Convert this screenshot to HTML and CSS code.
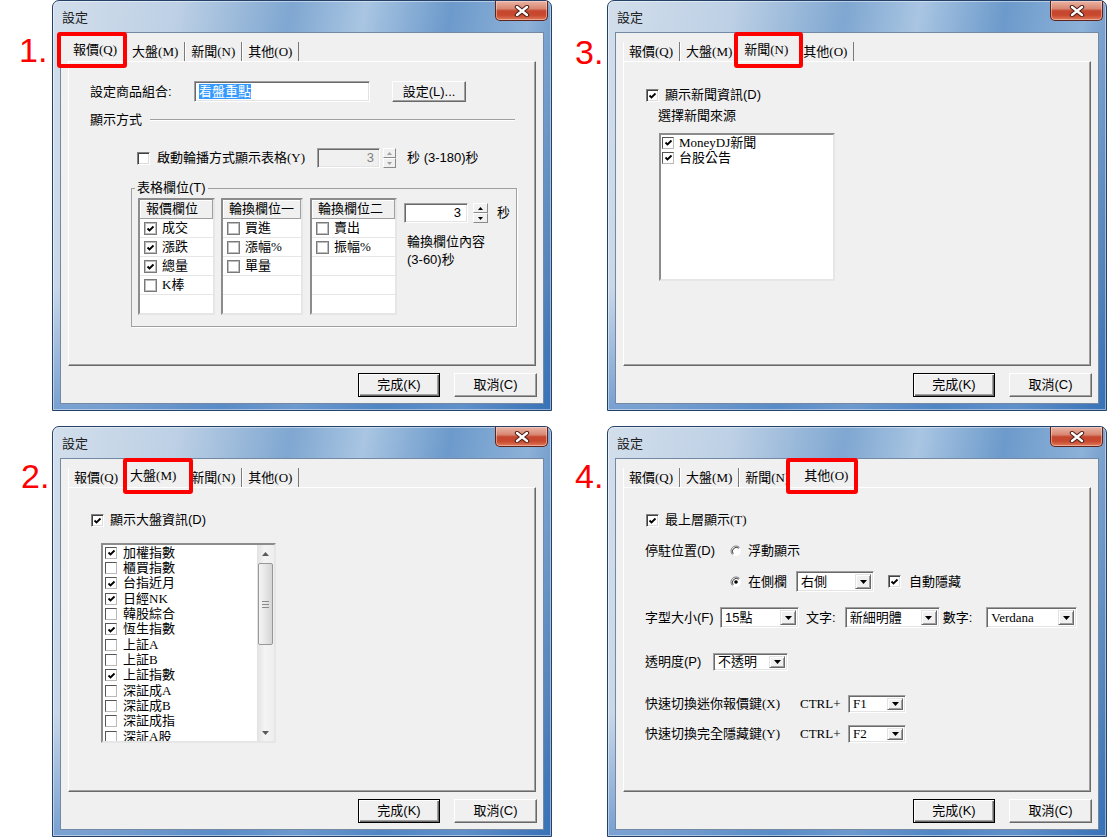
FILE: index.html
```html
<!DOCTYPE html>
<html lang="zh-Hant">
<head>
<meta charset="UTF-8">
<title>設定</title>
<link rel="stylesheet" href="styles.css">
</head>
<body>
<div class="sheet">

<div class="mark mark-1">1.</div>
<div class="win win-1">
  <div class="titlebar">
    <span class="title">設定</span>
    <span class="close"><svg width="16" height="12" viewBox="0 0 16 12"><path d="M3 2L13 10M13 2L3 10" stroke="#4a1d16" stroke-width="4.4" stroke-linecap="round"/><path d="M3 2L13 10M13 2L3 10" stroke="#fff" stroke-width="2.4" stroke-linecap="round"/></svg></span>
  </div>
  <div class="client">
    <div class="tabs">
      <span class="tab sel">報價(Q)</span><span class="tab">大盤(M)</span><span class="tab">新聞(N)</span><span class="tab">其他(O)</span>
    </div>
    <div class="panel p-quote">
      <div class="row r-combo">
        <span class="lbl-combo">設定商品組合:</span>
        <span class="edit edit-combo"><span class="hl">看盤重點</span></span>
        <button class="btn btn-set">設定(L)...</button>
      </div>
      <div class="row r-sep">
        <span>顯示方式</span><span class="etch"></span>
      </div>
      <div class="row r-rotate">
        <i class="cb"></i>
        <span class="t-rotate">啟動輪播方式顯示表格<span class="ming">(Y)</span></span>
        <span class="edit edit-sec off">3</span>
        <span class="spin off">
          <span class="spin-btn"><svg class="ar" viewBox="0 0 5 3"><path d="M0 3H5L2.5 0Z"/></svg></span>
          <span class="spin-btn"><svg class="ar" viewBox="0 0 5 3"><path d="M0 0H5L2.5 3Z"/></svg></span>
        </span>
        <span class="t-range">秒 (3-180)秒</span>
      </div>
      <fieldset class="group">
        <legend>表格欄位(T)</legend>
        <div class="cols">
          <div class="list l-quote">
            <div class="list-head">報價欄位</div>
            <div class="list-row"><i class="cb-flat"><svg class="ck" viewBox="0 0 9 9"><path d="M1.5 4.5L3.5 6.5L7.5 2.5"/></svg></i>成交</div>
            <div class="list-row"><i class="cb-flat"><svg class="ck" viewBox="0 0 9 9"><path d="M1.5 4.5L3.5 6.5L7.5 2.5"/></svg></i>漲跌</div>
            <div class="list-row"><i class="cb-flat"><svg class="ck" viewBox="0 0 9 9"><path d="M1.5 4.5L3.5 6.5L7.5 2.5"/></svg></i>總量</div>
            <div class="list-row"><i class="cb-flat"></i>K棒</div>
            <div class="list-row"></div>
          </div>
          <div class="list l-rot1">
            <div class="list-head">輪換欄位一</div>
            <div class="list-row"><i class="cb-flat"></i>買進</div>
            <div class="list-row"><i class="cb-flat"></i>漲幅%</div>
            <div class="list-row"><i class="cb-flat"></i>單量</div>
            <div class="list-row"></div>
            <div class="list-row"></div>
          </div>
          <div class="list l-rot2">
            <div class="list-head">輪換欄位二</div>
            <div class="list-row"><i class="cb-flat"></i>賣出</div>
            <div class="list-row"><i class="cb-flat"></i>振幅%</div>
            <div class="list-row"></div>
            <div class="list-row"></div>
            <div class="list-row"></div>
          </div>
          <div class="rot">
            <div class="rot-top">
              <span class="edit edit-rot">3</span>
              <span class="spin spin-rot">
                <span class="spin-btn"><svg class="ar" viewBox="0 0 5 3"><path d="M0 3H5L2.5 0Z"/></svg></span>
                <span class="spin-btn"><svg class="ar" viewBox="0 0 5 3"><path d="M0 0H5L2.5 3Z"/></svg></span>
              </span>
              <span class="t-sec">秒</span>
            </div>
            <div class="rot-note">輪換欄位內容</div>
            <div class="rot-note">(3-60)秒</div>
          </div>
        </div>
      </fieldset>
    </div>
    <div class="actions">
      <button class="btn btn-ok">完成(K)</button>
      <button class="btn">取消(C)</button>
    </div>
  </div>
</div>

<div class="mark mark-3">3.</div>
<div class="win win-3">
  <div class="titlebar">
    <span class="title">設定</span>
    <span class="close"><svg width="16" height="12" viewBox="0 0 16 12"><path d="M3 2L13 10M13 2L3 10" stroke="#4a1d16" stroke-width="4.4" stroke-linecap="round"/><path d="M3 2L13 10M13 2L3 10" stroke="#fff" stroke-width="2.4" stroke-linecap="round"/></svg></span>
  </div>
  <div class="client">
    <div class="tabs">
      <span class="tab">報價(Q)</span><span class="tab">大盤(M)</span><span class="tab sel">新聞(N)</span><span class="tab">其他(O)</span>
    </div>
    <div class="panel p-news">
      <div class="row r-check">
        <i class="cb"><svg class="ck" viewBox="0 0 9 9"><path d="M1.5 4.5L3.5 6.5L7.5 2.5"/></svg></i>
        <span>顯示新聞資訊(D)</span>
      </div>
      <div class="news-cap">選擇新聞來源</div>
      <div class="listbox lb-news">
        <div class="lb-items">
          <div class="lb-item"><i class="cb-list"><svg class="ck" viewBox="0 0 9 9"><path d="M1.5 4.5L3.5 6.5L7.5 2.5"/></svg></i><span class="ming">MoneyDJ新聞</span></div>
          <div class="lb-item"><i class="cb-list"><svg class="ck" viewBox="0 0 9 9"><path d="M1.5 4.5L3.5 6.5L7.5 2.5"/></svg></i><span class="ming">台股公告</span></div>
        </div>
      </div>
    </div>
    <div class="actions">
      <button class="btn btn-ok">完成(K)</button>
      <button class="btn">取消(C)</button>
    </div>
  </div>
</div>

<div class="mark mark-2">2.</div>
<div class="win win-2">
  <div class="titlebar">
    <span class="title">設定</span>
    <span class="close"><svg width="16" height="12" viewBox="0 0 16 12"><path d="M3 2L13 10M13 2L3 10" stroke="#4a1d16" stroke-width="4.4" stroke-linecap="round"/><path d="M3 2L13 10M13 2L3 10" stroke="#fff" stroke-width="2.4" stroke-linecap="round"/></svg></span>
  </div>
  <div class="client">
    <div class="tabs">
      <span class="tab">報價(Q)</span><span class="tab sel">大盤(M)</span><span class="tab">新聞(N)</span><span class="tab">其他(O)</span>
    </div>
    <div class="panel p-index">
      <div class="row r-check">
        <i class="cb"><svg class="ck" viewBox="0 0 9 9"><path d="M1.5 4.5L3.5 6.5L7.5 2.5"/></svg></i>
        <span>顯示大盤資訊(D)</span>
      </div>
      <div class="listbox lb-index">
        <div class="lb-items">
          <div class="lb-item"><i class="cb-list"><svg class="ck" viewBox="0 0 9 9"><path d="M1.5 4.5L3.5 6.5L7.5 2.5"/></svg></i><span class="ming">加權指數</span></div>
          <div class="lb-item"><i class="cb-list"></i><span class="ming">櫃買指數</span></div>
          <div class="lb-item"><i class="cb-list"><svg class="ck" viewBox="0 0 9 9"><path d="M1.5 4.5L3.5 6.5L7.5 2.5"/></svg></i><span class="ming">台指近月</span></div>
          <div class="lb-item"><i class="cb-list"><svg class="ck" viewBox="0 0 9 9"><path d="M1.5 4.5L3.5 6.5L7.5 2.5"/></svg></i><span class="ming">日經NK</span></div>
          <div class="lb-item"><i class="cb-list"></i><span class="ming">韓股綜合</span></div>
          <div class="lb-item"><i class="cb-list"><svg class="ck" viewBox="0 0 9 9"><path d="M1.5 4.5L3.5 6.5L7.5 2.5"/></svg></i><span class="ming">恆生指數</span></div>
          <div class="lb-item"><i class="cb-list"></i><span class="ming">上証A</span></div>
          <div class="lb-item"><i class="cb-list"></i><span class="ming">上証B</span></div>
          <div class="lb-item"><i class="cb-list"><svg class="ck" viewBox="0 0 9 9"><path d="M1.5 4.5L3.5 6.5L7.5 2.5"/></svg></i><span class="ming">上証指數</span></div>
          <div class="lb-item"><i class="cb-list"></i><span class="ming">深証成A</span></div>
          <div class="lb-item"><i class="cb-list"></i><span class="ming">深証成B</span></div>
          <div class="lb-item"><i class="cb-list"></i><span class="ming">深証成指</span></div>
          <div class="lb-item"><i class="cb-list"></i><span class="ming">深証A股</span></div>
        </div>
        <div class="vscroll">
          <span class="sb-btn"><svg class="sb-ar" viewBox="0 0 7 4"><path d="M0 4H7L3.5 0Z"/></svg></span>
          <span class="sb-track">
            <span class="sb-thumb"><svg class="grip" viewBox="0 0 7 7"><path d="M0 .5H7M0 3.5H7M0 6.5H7"/></svg></span>
          </span>
          <span class="sb-btn"><svg class="sb-ar" viewBox="0 0 7 4"><path d="M0 0H7L3.5 4Z"/></svg></span>
        </div>
      </div>
    </div>
    <div class="actions">
      <button class="btn btn-ok">完成(K)</button>
      <button class="btn">取消(C)</button>
    </div>
  </div>
</div>

<div class="mark mark-4">4.</div>
<div class="win win-4">
  <div class="titlebar">
    <span class="title">設定</span>
    <span class="close"><svg width="16" height="12" viewBox="0 0 16 12"><path d="M3 2L13 10M13 2L3 10" stroke="#4a1d16" stroke-width="4.4" stroke-linecap="round"/><path d="M3 2L13 10M13 2L3 10" stroke="#fff" stroke-width="2.4" stroke-linecap="round"/></svg></span>
  </div>
  <div class="client">
    <div class="tabs">
      <span class="tab">報價(Q)</span><span class="tab">大盤(M)</span><span class="tab">新聞(N)</span><span class="tab sel">其他(O)</span>
    </div>
    <div class="panel p-other">
      <div class="row r-check">
        <i class="cb"><svg class="ck" viewBox="0 0 9 9"><path d="M1.5 4.5L3.5 6.5L7.5 2.5"/></svg></i>
        <span>最上層顯示<span class="ming">(T)</span></span>
      </div>
      <div class="row r-dock">
        <span class="lbl-dock">停駐位置(D)</span>
        <svg class="radio" viewBox="0 0 12 12"><circle cx="6" cy="6" r="5" fill="#fff"/><path d="M2.46 9.54A5 5 0 0 1 9.54 2.46" stroke="#7a7a7a" fill="none"/><path d="M3.2 8.8A4 4 0 0 1 8.8 3.2" stroke="#3c3c3c" fill="none"/></svg>
        <span class="t-radio">浮動顯示</span>
      </div>
      <div class="row r-side">
        <svg class="radio" viewBox="0 0 12 12"><circle cx="6" cy="6" r="5" fill="#fff"/><path d="M2.46 9.54A5 5 0 0 1 9.54 2.46" stroke="#7a7a7a" fill="none"/><path d="M3.2 8.8A4 4 0 0 1 8.8 3.2" stroke="#3c3c3c" fill="none"/><circle cx="6" cy="6" r="1.8" fill="#000"/></svg>
        <span class="t-radio">在側欄</span>
        <span class="combo c-side"><span class="combo-val">右側</span><span class="combo-btn"><svg class="dd" viewBox="0 0 7 4"><path d="M0 0H7L3.5 4Z"/></svg></span></span>
        <i class="cb cb-hide"><svg class="ck" viewBox="0 0 9 9"><path d="M1.5 4.5L3.5 6.5L7.5 2.5"/></svg></i>
        <span class="t-hide">自動隱藏</span>
      </div>
      <div class="row r-font">
        <span class="lbl-font">字型大小(F)</span>
        <span class="combo c-size"><span class="combo-val">15點</span><span class="combo-btn"><svg class="dd" viewBox="0 0 7 4"><path d="M0 0H7L3.5 4Z"/></svg></span></span>
        <span class="t-text">文字:</span>
        <span class="combo c-face"><span class="combo-val">新細明體</span><span class="combo-btn"><svg class="dd" viewBox="0 0 7 4"><path d="M0 0H7L3.5 4Z"/></svg></span></span>
        <span class="t-num">數字:</span>
        <span class="combo c-num"><span class="combo-val ming">Verdana</span><span class="combo-btn"><svg class="dd" viewBox="0 0 7 4"><path d="M0 0H7L3.5 4Z"/></svg></span></span>
      </div>
      <div class="row r-alpha">
        <span class="lbl-alpha">透明度(P)</span>
        <span class="combo combo-s c-alpha"><span class="combo-val">不透明</span><span class="combo-btn"><svg class="dd" viewBox="0 0 7 4"><path d="M0 0H7L3.5 4Z"/></svg></span></span>
      </div>
      <div class="row r-key">
        <span class="lbl-key">快速切換迷你報價鍵<span class="ming">(X)</span></span>
        <span class="t-ctrl ming">CTRL+</span>
        <span class="combo combo-s c-key"><span class="combo-val ming">F1</span><span class="combo-btn"><svg class="dd" viewBox="0 0 7 4"><path d="M0 0H7L3.5 4Z"/></svg></span></span>
      </div>
      <div class="row r-key r-key2">
        <span class="lbl-key">快速切換完全隱藏鍵<span class="ming">(Y)</span></span>
        <span class="t-ctrl ming">CTRL+</span>
        <span class="combo combo-s c-key"><span class="combo-val ming">F2</span><span class="combo-btn"><svg class="dd" viewBox="0 0 7 4"><path d="M0 0H7L3.5 4Z"/></svg></span></span>
      </div>
    </div>
    <div class="actions">
      <button class="btn btn-ok">完成(K)</button>
      <button class="btn">取消(C)</button>
    </div>
  </div>
</div>

</div>
</body>
</html>
```

FILE: styles.css
```css
* {
    box-sizing: border-box;
}

body {
    margin: 0;
    background: #fff;
    font-family: "Liberation Sans", "Noto Sans CJK TC", sans-serif;
    font-size: 13px;
    line-height: 16px;
    color: #000;
}

.ming {
    font-family: "Liberation Serif", "Noto Sans CJK TC", serif;
}

.sheet {
    display: grid;
    grid-template-columns: 52px 500px 55px 500px;
    grid-template-rows: 411px 411px;
    row-gap: 15px;
}

/* red step numbers */
.mark {
    color: #f00;
    font-family: "Liberation Sans", sans-serif;
    font-size: 34px;
    line-height: 34px;
}

.mark-1 { padding: 33px 0 0 19px; }
.mark-3 { padding: 35px 0 0 23px; }
.mark-2 { padding: 33px 0 0 21px; }
.mark-4 { padding: 33px 0 0 23px; }

/* window frame */
.win {
    display: flex;
    flex-direction: column;
    height: 411px;
    padding: 0 7px 6px;
    border: 1px solid #24416a;
    border-radius: 7px 7px 0 0;
    background:
        linear-gradient(to bottom, rgba(255, 255, 255, 0) 70%, rgba(55, 115, 190, .55) 100%),
        linear-gradient(100deg, #d2deeb 0%, #bdd0e5 22%, #7fa7d1 42%, #a9c5e2 55%, #6c9acb 70%, #8db1d8 84%, #3b70ae 100%);
    box-shadow: inset 0 0 0 1px rgba(255, 255, 255, .45);
}

.titlebar {
    flex: none;
    height: 31px;
    display: flex;
    justify-content: space-between;
    align-items: flex-start;
}

.title {
    margin: 9px 0 0 2px;
    color: #222;
}

.close {
    width: 53px;
    height: 20px;
    margin-right: -4px;
    display: flex;
    align-items: center;
    justify-content: center;
    border: 1px solid #5e231a;
    border-top: none;
    border-radius: 0 0 5px 5px;
    background: linear-gradient(#eab3a6 0%, #d88872 40%, #c4472f 52%, #c9492d 75%, #e07a5c 100%);
    box-shadow: inset 0 0 0 1px rgba(255, 230, 220, .45);
}

.client {
    flex: 1;
    display: flex;
    flex-direction: column;
    padding: 8px 6px 0 7px;
    background: #f0f0f0;
    border: 1px solid #7389a3;
}

/* tabs */
.tabs {
    flex: none;
    display: flex;
    align-items: flex-end;
    height: 20px;
    font-family: "Liberation Serif", "Noto Sans CJK TC", serif;
}

.tab {
    height: 19px;
    line-height: 19px;
    padding: 0 6px;
    border-right: 1px solid #7a7a7a;
    box-shadow: inset 1px 0 #fff;
    white-space: nowrap;
}

.tab.sel {
    position: relative;
    z-index: 1;
    height: 21px;
    line-height: 20px;
    margin: 0 -2px;
    padding: 0 11px 0 7px;
    background: #f0f0f0;
    border-right: none;
    box-shadow: none;
}

.tab.sel::after {
    content: "";
    position: absolute;
    top: -8px;
    bottom: -7px;
    left: -9px;
    right: 1px;
    border: 4px solid #f00;
    border-radius: 3px;
}

.win-3 .tab.sel::after { left: -3px; right: -4px; }
.win-2 .tab.sel::after { left: 0; right: -6px; }
.win-4 .tab.sel::after { left: -5px; right: -2px; }

.win-4 .tab.sel { padding-left: 10px; padding-right: 8px; }
.win-4 .tab.sel::after { left: -8px; right: -2px; }

.panel {
    flex: none;
    height: 305px;
    margin-right: 1px;
    border: 1px solid;
    border-color: #fff #696969 #696969 #fff;
    box-shadow: inset -1px -1px #a0a0a0;
}

.actions {
    display: flex;
    justify-content: flex-end;
    gap: 14px;
    margin-top: 7px;
}

.btn {
    width: 82px;
    height: 24px;
    padding: 0;
    font: inherit;
    color: #000;
    background: #f0f0f0;
    border: 1px solid;
    border-color: #fff #696969 #696969 #fff;
    box-shadow: inset -1px -1px #a0a0a0;
}

.btn-ok {
    border-color: #000;
    box-shadow: inset 1px 1px #fff, inset -1px -1px #696969, inset -2px -2px #a0a0a0;
}

.actions .btn + .btn {
    width: 83px;
}

/* common controls */
.row {
    display: flex;
    align-items: center;
}

.cb {
    flex: none;
    width: 13px;
    height: 13px;
    display: inline-flex;
    align-items: center;
    justify-content: center;
    background: #fff;
    border: 1px solid;
    border-color: #808080 #fff #fff #808080;
    box-shadow: inset 1px 1px #404040, inset -1px -1px #dcdcdc;
}

.cb-flat {
    flex: none;
    width: 13px;
    height: 13px;
    display: inline-flex;
    align-items: center;
    justify-content: center;
    background: #fff;
    border: 1px solid #7a7a7a;
    box-shadow: inset 0 0 0 1px #bdbdbd;
}

.cb-list {
    flex: none;
    width: 12px;
    height: 12px;
    display: inline-flex;
    align-items: center;
    justify-content: center;
    background: #fff;
    border: 1px solid;
    border-color: #555 #b9b9b9 #b9b9b9 #555;
}

.ck {
    width: 9px;
    height: 9px;
    fill: none;
    stroke: #000;
    stroke-width: 1.8;
}

.edit {
    display: flex;
    align-items: center;
    background: #fff;
    border: 1px solid;
    border-color: #a0a0a0 #fff #fff #a0a0a0;
    box-shadow: inset 1px 1px #696969, inset -1px -1px #e3e3e3;
}

.edit.off {
    background: #f0f0f0;
    color: #808080;
}

.spin {
    flex: none;
    display: flex;
    flex-direction: column;
    width: 13px;
    height: 20px;
}

.spin-btn {
    flex: 1;
    display: flex;
    align-items: center;
    justify-content: center;
    background: #f0f0f0;
    border: 1px solid;
    border-color: #fff #8a8a8a #8a8a8a #fff;
}

.ar {
    width: 5px;
    height: 3px;
    fill: #000;
}

.spin.off .ar {
    fill: #a0a0a0;
}

.radio {
    flex: none;
    width: 12px;
    height: 12px;
}

.combo {
    flex: none;
    display: flex;
    height: 21px;
    padding: 2px;
    background: #fff;
    border: 1px solid;
    border-color: #a0a0a0 #fff #fff #a0a0a0;
    box-shadow: inset 1px 1px #696969, inset -1px -1px #e3e3e3;
}

.combo-s {
    height: 18px;
}

.combo-val {
    flex: 1;
    padding-left: 2px;
    line-height: 15px;
    white-space: nowrap;
}

.combo-s .combo-val {
    line-height: 12px;
}

.combo-btn {
    flex: none;
    width: 16px;
    display: flex;
    align-items: center;
    justify-content: center;
    background: #f0f0f0;
    border: 1px solid;
    border-color: #e3e3e3 #696969 #696969 #e3e3e3;
    box-shadow: inset 1px 1px #fff, inset -1px -1px #a0a0a0;
}

.dd {
    width: 7px;
    height: 4px;
    fill: #000;
}

.listbox {
    display: flex;
    background: #fff;
    border: 2px solid;
    border-color: #8c8c8c #e6e6e6 #e6e6e6 #8c8c8c;
    overflow: hidden;
}

.lb-items {
    flex: 1;
    overflow: hidden;
}

.lb-item {
    display: flex;
    align-items: center;
    gap: 5px;
    padding-left: 1px;
    height: 15px;
    white-space: nowrap;
}

/* 1. quote tab */
.p-quote {
    padding: 19px 0 0 21px;
}

.r-combo {
    height: 21px;
}

.lbl-combo {
    width: 104px;
}

.edit-combo {
    width: 176px;
    height: 21px;
    padding-left: 4px;
}

.hl {
    background: #3399ff;
    color: #fff;
    line-height: 15px;
}

.btn-set {
    width: 74px;
    height: 21px;
    margin-left: 22px;
}

.r-sep {
    margin-top: 10px;
    height: 16px;
}

.etch {
    flex: 1;
    margin: 0 20px 0 8px;
    border-top: 1px solid #a0a0a0;
    border-bottom: 1px solid #fff;
}

.r-rotate {
    margin-top: 20px;
    height: 20px;
    padding-left: 47px;
}

.t-rotate {
    margin-left: 7px;
}

.edit-sec {
    width: 63px;
    height: 20px;
    margin-left: 12px;
    justify-content: flex-end;
    padding-right: 5px;
}

.r-rotate .spin {
    margin-left: 3px;
}

.t-range {
    margin-left: 11px;
}

.group {
    margin: 12px 18px 0 41px;
    padding: 2px 0 11px 6px;
    border: 1px solid #a0a0a0;
    box-shadow: 1px 1px 0 #fff;
}

.group legend {
    margin-left: -3px;
    padding: 0 2px;
    line-height: 16px;
}

.cols {
    display: flex;
}

.list {
    height: 117px;
    overflow: hidden;
    background: #fff;
    border: 2px solid;
    border-color: #8c8c8c #e6e6e6 #e6e6e6 #8c8c8c;
}

.l-quote { width: 77px; }
.l-rot1 { width: 82px; margin-left: 6px; }
.l-rot2 { width: 87px; margin-left: 7px; }

.list-head {
    height: 19px;
    line-height: 18px;
    padding-left: 6px;
    background: #f0f0f0;
    border-bottom: 1px solid #a0a0a0;
    border-right: 1px solid #a0a0a0;
    box-shadow: inset 1px 1px #fff;
    white-space: nowrap;
}

.list-row {
    display: flex;
    align-items: center;
    gap: 5px;
    height: 19px;
    padding-left: 4px;
    border-bottom: 1px solid #e6e6e6;
    font-family: "Liberation Serif", "Noto Sans CJK TC", serif;
}

.rot {
    margin: 5px 0 0 7px;
}

.rot-top {
    display: flex;
    align-items: center;
}

.edit-rot {
    width: 64px;
    height: 20px;
    justify-content: flex-end;
    padding-right: 6px;
}

.spin-rot {
    width: 15px;
    margin-left: 5px;
}

.t-sec {
    margin-left: 9px;
}

.rot-note {
    line-height: 18px;
    padding-left: 3px;
}

.rot-top + .rot-note {
    margin-top: 10px;
}

/* 2. index tab */
.p-index {
    padding: 24px 0 0 22px;
}

.r-check {
    height: 16px;
    gap: 6px;
}

.lb-index {
    width: 175px;
    height: 200px;
    margin: 15px 0 0 10px;
}

.lb-index .lb-item {
    height: 15.33px;
    padding-left: 2px;
    gap: 6px;
}

.vscroll {
    flex: none;
    width: 17px;
    display: flex;
    flex-direction: column;
    background: linear-gradient(to right, #e2e2e2, #f4f4f4 45%, #eeeeee);
}

.sb-btn {
    flex: none;
    height: 17px;
    display: flex;
    align-items: center;
    justify-content: center;
}

.sb-ar {
    width: 7px;
    height: 4px;
    fill: #5a5a5a;
}

.sb-track {
    flex: 1;
    padding-top: 1px;
}

.sb-thumb {
    display: flex;
    align-items: center;
    justify-content: center;
    height: 82px;
    margin: 0 1px;
    border: 1px solid #979797;
    border-radius: 2px;
    background: linear-gradient(to right, #f4f4f4, #e6e6e6 50%, #d4d4d4);
}

.grip {
    width: 7px;
    height: 7px;
    stroke: #8a8a8a;
    stroke-width: 1;
}

/* 3. news tab */
.p-news {
    padding: 25px 0 0 22px;
}

.news-cap {
    margin: 5px 0 0 12px;
}

.lb-news {
    width: 176px;
    height: 148px;
    margin: 9px 0 0 13px;
}

.lb-news .lb-item {
    height: 15px;
    padding-left: 1px;
}

/* 4. other tab */
.p-other {
    padding: 24px 0 0 22px;
}

.r-dock {
    margin: 15px 0 0 -1px;
    height: 16px;
}

.lbl-dock {
    width: 85px;
}

.t-radio {
    margin-left: 6px;
}

.r-side {
    margin-top: 12px;
    height: 21px;
    padding-left: 84px;
}

.c-side {
    width: 78px;
    margin-left: 9px;
}

.cb-hide {
    margin-left: 14px;
}

.t-hide {
    margin-left: 8px;
}

.r-font {
    margin: 15px 0 0 -1px;
    height: 21px;
}

.lbl-font {
    width: 75px;
}

.c-size { width: 79px; }

.t-text {
    margin-left: 7px;
}

.c-face {
    width: 95px;
    margin-left: 9px;
}

.t-num {
    margin-left: 3px;
}

.c-num {
    width: 91px;
    margin-left: 14px;
}

.r-alpha {
    margin: 25px 0 0 -1px;
    height: 18px;
}

.lbl-alpha {
    width: 68px;
}

.c-alpha { width: 75px; }

.r-key {
    margin: 24px 0 0 -1px;
    height: 18px;
}

.r-key2 {
    margin-top: 12px;
}

.lbl-key {
    width: 155px;
    white-space: nowrap;
}

.t-ctrl {
    width: 48px;
}

.c-key { width: 58px; }
```
